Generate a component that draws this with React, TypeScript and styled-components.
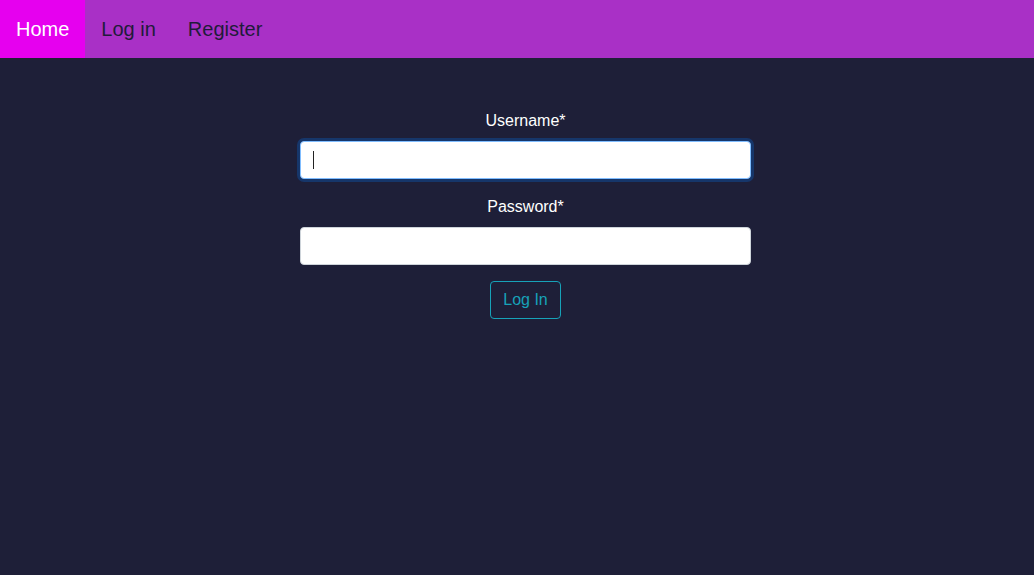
import React from 'react';
import styled, { createGlobalStyle, css } from 'styled-components';

const GlobalStyle = createGlobalStyle`
  html, body {
    margin: 0;
    padding: 0;
    background: #1e1f38;
    font-family: "Liberation Sans", Arial, sans-serif;
  }
  * {
    box-sizing: border-box;
  }
`;

const Page = styled.div`
  min-height: 100vh;
  background: #1e1f38;
`;

const NavBar = styled.nav`
  display: flex;
  height: 58px;
  background: #a930c6;
`;

const NavLink = styled.a<{ $active?: boolean }>`
  display: flex;
  align-items: center;
  padding: 0 16px;
  font-size: 20px;
  text-decoration: none;
  color: #1f1b3a;
  cursor: pointer;
  ${(p) =>
    p.$active &&
    css`
      background: #e600ef;
      color: #ffffff;
    `}
`;

const Main = styled.main`
  display: flex;
  justify-content: center;
  padding: 51px 0 0 17px;
`;

const Form = styled.form`
  width: 451px;
  display: flex;
  flex-direction: column;
  align-items: center;
`;

const Group = styled.div`
  width: 100%;
  display: flex;
  flex-direction: column;
  align-items: center;
  margin-bottom: 16px;
`;

const Label = styled.label`
  color: #ffffff;
  font-size: 16px;
  line-height: 24px;
  margin-bottom: 8px;
`;

const Field = styled.div`
  position: relative;
  width: 100%;
`;

// drawn caret, since the headless shot does not show the blinking one
const Caret = styled.span`
  position: absolute;
  left: 13px;
  top: 10px;
  width: 1px;
  height: 18px;
  background: #222222;
  pointer-events: none;
`;

const Input = styled.input<{ $focused?: boolean }>`
  display: block;
  width: 100%;
  height: 38px;
  padding: 6px 12px;
  font-size: 16px;
  font-family: inherit;
  color: #495057;
  background: #ffffff;
  border: 1px solid #ced4da;
  border-radius: 4px;
  outline: none;
  caret-color: transparent;
  ${(p) =>
    p.$focused &&
    css`
      border-color: #80bdff;
      box-shadow: 0 0 0 3px rgba(0, 123, 255, 0.25);
    `}
  &:focus {
    border-color: #80bdff;
    box-shadow: 0 0 0 3px rgba(0, 123, 255, 0.25);
  }
`;

const SubmitButton = styled.button`
  height: 38px;
  padding: 6px 12px;
  font-size: 16px;
  line-height: 24px;
  font-family: inherit;
  color: #17a2b8;
  background: transparent;
  border: 1px solid #17a2b8;
  border-radius: 4px;
  cursor: pointer;
`;

const App = () => {
  return (
    <Page>
      <GlobalStyle />
      <NavBar>
        <NavLink $active>Home</NavLink>
        <NavLink>Log in</NavLink>
        <NavLink>Register</NavLink>
      </NavBar>
      <Main>
        <Form onSubmit={(e) => e.preventDefault()}>
          <Group>
            <Label htmlFor="username">Username*</Label>
            <Field>
              <Input id="username" type="text" $focused />
              <Caret />
            </Field>
          </Group>
          <Group>
            <Label htmlFor="password">Password*</Label>
            <Field>
              <Input id="password" type="password" />
            </Field>
          </Group>
          <SubmitButton type="submit">Log In</SubmitButton>
        </Form>
      </Main>
    </Page>
  );
};

export default App;
